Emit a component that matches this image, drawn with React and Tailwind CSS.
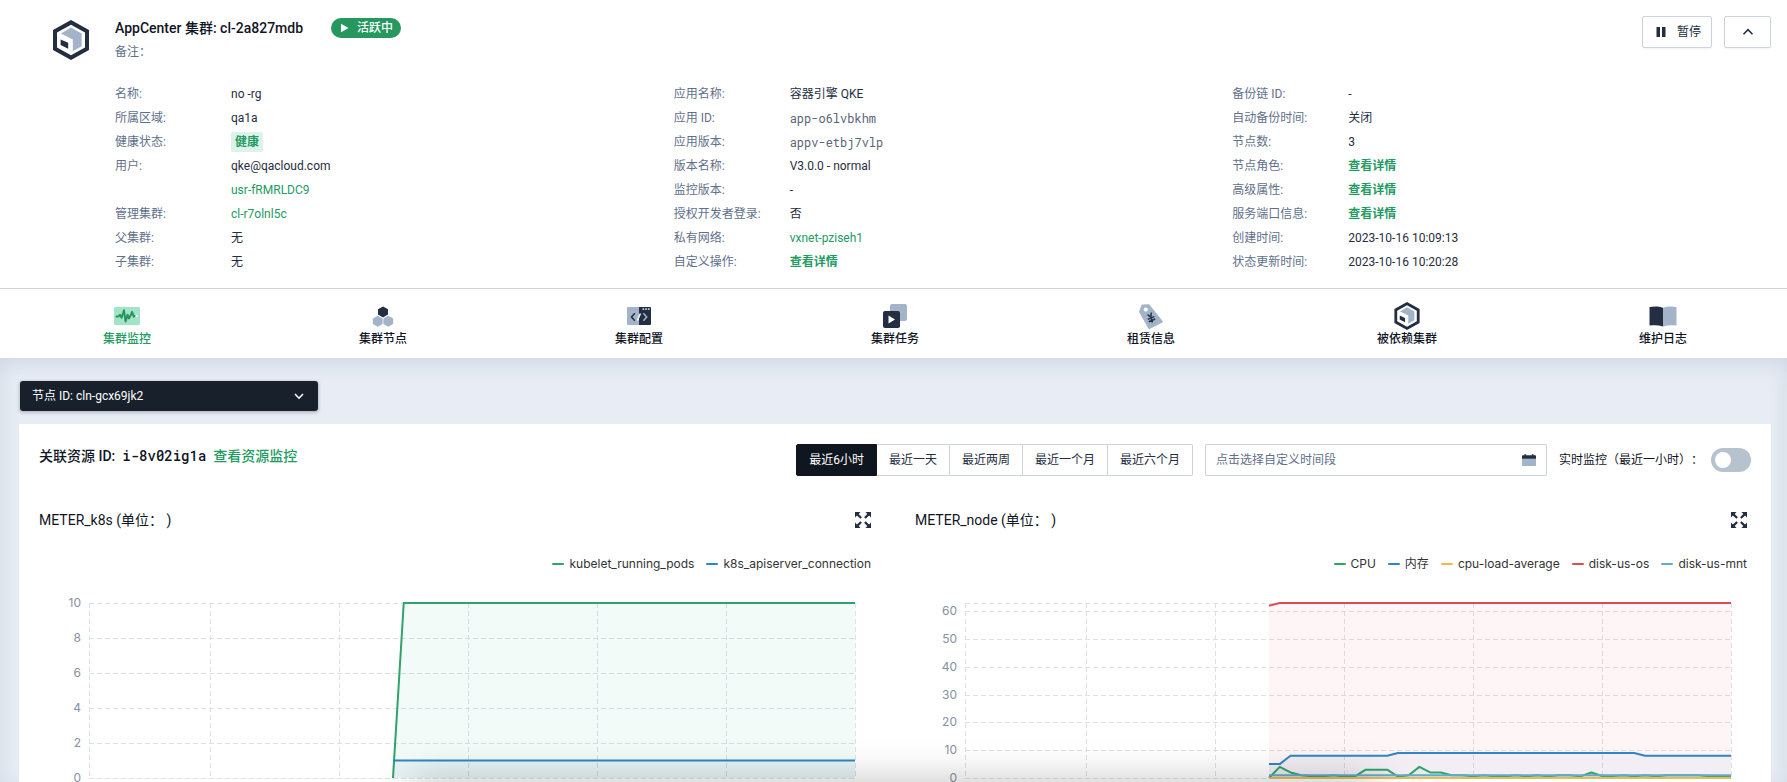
import React from "react";

const SANS = "font-[Roboto,'Noto_Sans_CJK_SC',sans-serif]";
const MONO = "font-['Roboto_Mono','Liberation_Mono',monospace]";

function ClusterIcon({ className }) {
  return (
    <svg viewBox="0 0 36 40" className={className} aria-hidden="true">
      <path fillRule="evenodd" fill="#242e42" d="M18 0 36 10v20L18 40 0 30V10ZM18 4.8 4 12.4v15.2l14 7.6 14-7.6V12.4Z" />
      <path fill="#a3b4c8" d="M18 7.6 28.6 13.4v12.8L19.8 31.2V19.4L8 13.6Z" />
      <path fill="#242e42" d="M7.6 19.4 15.2 22.8v6L7.6 25Z" />
    </svg>
  );
}

function MonitorIcon() {
  return (
    <svg viewBox="0 0 28 28" className="size-7" aria-hidden="true">
      <rect x="1" y="5" width="26" height="18" rx="1.5" fill="#a3e3c6" />
      <path d="M3.5 14.5h2l1.5-1.8 1.6 3L11 8.2l1.6 11.4 2-7 1.3 3.8 1.6-2.6 1.6-4 1.7 5 1.2-1" fill="none" stroke="#27935f" strokeWidth="1.9" strokeLinejoin="round" strokeLinecap="round" />
      <circle cx="23.6" cy="14" r="1.2" fill="#fff" />
    </svg>
  );
}

function NodesIcon() {
  return (
    <svg viewBox="0 0 28 28" className="size-7" aria-hidden="true">
      <path fill="#242e42" d="m14 4.4 5 2.8v5.4l-5 2.800-5-2.800V7.200Z" />
      <path fill="#a3b4c8" d="m8.700 13.800 4.900 2.800v5.400l-4.900 2.800-4.900-2.800v-5.400ZM19.300 13.800l4.900 2.800v5.400l-4.900 2.800-4.900-2.800v-5.400Z" />
    </svg>
  );
}

function ConfigIcon() {
  return (
    <svg viewBox="0 0 28 28" className="size-7" aria-hidden="true">
      <path fill="#a3b4c8" d="M3 5h11v18H3a1 1 0 0 1-1-1V6a1 1 0 0 1 1-1Z" />
      <path fill="#242e42" d="M14 5h11a1 1 0 0 1 1 1v16a1 1 0 0 1-1 1H14Z" />
      <path d="m9.800 11.300-3.300 3.700 3.300 3.700" fill="none" stroke="#242e42" strokeWidth="1.500" />
      <path d="m18.400 11.300 3.300 3.700-3.300 3.700" fill="none" stroke="#a3b4c8" strokeWidth="1.500" />
      <path d="m15.400 11.500-3 7" stroke="#fff" strokeWidth="1.500" />
      <path d="M17.500 7.200h1.700M20.200 7.200h1.700M22.900 7.200h1.700" stroke="#c1c9d1" strokeWidth="1.700" />
    </svg>
  );
}

function TasksIcon() {
  return (
    <svg viewBox="0 0 28 28" className="size-7" aria-hidden="true">
      <rect x="9" y="2" width="17" height="17" rx="2" fill="#a3b4c8" />
      <rect x="2" y="9" width="17" height="17" rx="2" fill="#242e42" />
      <path fill="#fff" d="m7.500 13.500 6.500 4-6.500 4Z" />
    </svg>
  );
}

function LeaseIcon() {
  return (
    <svg viewBox="0 0 28 28" className="size-7" aria-hidden="true">
      <path fill="#a3b4c8" d="M5.500 2.500 11.500 2.200a1.500 1.500 0 0 1 1.300.7L25.700 19.200a1 1 0 0 1-.3 1.300L12.600 27a1 1 0 0 1-1.300-.5L2.300 10.200a1.500 1.500 0 0 1 0-1.200L4.400 3.200a1.500 1.500 0 0 1 1.100-.7Z" />
      <circle cx="8.800" cy="7.600" r="2.100" fill="#fff" />
      <path d="m10.500 12.600 3.200 2.400.7-4.400M13.700 15l1.800 5.400M10.700 17.400l6.600-2.800M11.800 19.800l6.400-2.800" fill="none" stroke="#242e42" strokeWidth="1.500" />
    </svg>
  );
}

function LogIcon() {
  return (
    <svg viewBox="0 0 28 28" className="size-7" aria-hidden="true">
      <path fill="#242e42" d="M.5 5c5-1 9.500-.8 13.500.8V24.500C9.500 23 5 22.800.5 23.600Z" />
      <path fill="#a3b4c8" d="M27.500 5c-5-1-9.500-.8-13.500.8V24.500c4.500-1.500 9-1.700 13.500-.9Z" />
    </svg>
  );
}

function ExpandIcon() {
  return (
    <svg viewBox="0 0 16 16" className="size-4" aria-hidden="true">
      <path fill="#242e42" d="M0 0h5.500L3.700 1.900l3.200 3.400-1.500 1.500-3.500-3.200L0 5.500ZM16 0v5.500l-1.900-1.900-3.500 3.200-1.500-1.500 3.200-3.400L10.500 0ZM0 16v-5.500l1.900 1.900 3.500-3.200 1.500 1.500-3.200 3.400L5.500 16ZM16 16h-5.500l1.800-1.900-3.200-3.400 1.500-1.500 3.500 3.200 1.900-1.900Z" />
    </svg>
  );
}

const DETAILS = "查看详情";

const INFO = [
  [
    ["名称:", "no -rg"],
    ["所属区域:", "qa1a"],
    ["健康状态:", "健康", "tag"],
    ["用户:", "qke@qacloud.com"],
    ["", "usr-fRMRLDC9", "link"],
    ["管理集群:", "cl-r7olnl5c", "link"],
    ["父集群:", "无"],
    ["子集群:", "无"],
  ],
  [
    ["应用名称:", "容器引擎 QKE"],
    ["应用 ID:", "app-o6lvbkhm", "mono"],
    ["应用版本:", "appv-etbj7vlp", "mono"],
    ["版本名称:", "V3.0.0 - normal"],
    ["监控版本:", "-"],
    ["授权开发者登录:", "否"],
    ["私有网络:", "vxnet-pziseh1", "link"],
    ["自定义操作:", DETAILS, "action"],
  ],
  [
    ["备份链 ID:", "-"],
    ["自动备份时间:", "关闭"],
    ["节点数:", "3"],
    ["节点角色:", DETAILS, "action"],
    ["高级属性:", DETAILS, "action"],
    ["服务端口信息:", DETAILS, "action"],
    ["创建时间:", "2023-10-16 10:09:13"],
    ["状态更新时间:", "2023-10-16 10:20:28"],
  ],
];

function Value({ text, kind }) {
  if (kind === "tag")
    return <span className="inline-block rounded-xs bg-[#ddf3e9] px-1 leading-5 font-bold text-[#229b62]">{text}</span>;
  if (kind === "link") return <a href="#" className="text-[#229b62]">{text}</a>;
  if (kind === "action") return <a href="#" className="font-bold text-[#229b62]">{text}</a>;
  if (kind === "mono") return <span className={`${MONO} text-[#5a6575]`}>{text}</span>;
  return text;
}

function Header() {
  return (
    <header className="flex border-b border-[#ccd3db] bg-white pt-4 pr-4 pb-[14px] pl-[53px]">
      <ClusterIcon className="mt-1 mr-[26px] h-10 w-9 shrink-0" />
      <div className="min-w-0 flex-1">
        <div className="flex items-start justify-between">
          <div>
            <div className="flex h-6 items-center gap-7">
              <h1 className="text-sm font-medium text-[#10151f]">AppCenter 集群: cl-2a827mdb</h1>
              <span className="flex h-5 items-center gap-1.5 rounded-full bg-[#26985f] px-2 text-xs font-medium text-white">
                <svg viewBox="0 0 12 12" className="size-3" aria-hidden="true">
                  <path fill="#fff" d="m2 1.800 7.500 4.200L2 10.200Z" />
                </svg>
                活跃中
              </span>
            </div>
            <p className="text-xs leading-6 text-[#5f708a]">备注：</p>
          </div>
          <div className="flex gap-3">
            <button type="button" className="flex h-8 items-center gap-2 rounded-xs border border-[#ccd3db] px-[10px] text-xs text-[#242e42] shadow-xs">
              <svg viewBox="0 0 16 16" className="size-4" aria-hidden="true">
                <path fill="#242e42" d="M3.500 3h3.500v10H3.500ZM9 3h3.500v10H9Z" />
              </svg>
              暂停
            </button>
            <button type="button" aria-label="收起" className="flex h-8 w-[47px] items-center justify-center rounded-xs border border-[#ccd3db] shadow-xs">
              <svg viewBox="0 0 16 16" className="size-4" aria-hidden="true">
                <path d="m3.500 10.300 4.500-4.600 4.500 4.600" fill="none" stroke="#242e42" strokeWidth="1.600" />
              </svg>
            </button>
          </div>
        </div>
        <div className="mt-[18px] grid grid-cols-3 gap-5 text-xs text-[#242e42]">
          {INFO.map((rows, c) => (
            <dl key={c}>
              {rows.map(([label, text, kind], i) => (
                <div key={i} className="flex h-6 items-center">
                  <dt className="w-[116px] shrink-0 text-[#5f708a]">{label}</dt>
                  <dd><Value text={text} kind={kind} /></dd>
                </div>
              ))}
            </dl>
          ))}
        </div>
      </div>
    </header>
  );
}

const TABS = [
  ["集群监控", <MonitorIcon />],
  ["集群节点", <NodesIcon />],
  ["集群配置", <ConfigIcon />],
  ["集群任务", <TasksIcon />],
  ["租赁信息", <LeaseIcon />],
  ["被依赖集群", <ClusterIcon className="h-7 w-7" />],
  ["维护日志", <LogIcon />],
];

function Tabs() {
  return (
    <nav className="-mr-1 -ml-px grid grid-cols-7 bg-white pt-[13px] pb-[10px]">
      {TABS.map(([label, icon], i) => (
        <a key={label} href="#" className={`flex flex-col items-center text-xs leading-[18px] font-medium ${i === 0 ? "text-[#229b62]" : "text-[#10151f]"}`}>
          <span className="flex h-7 items-center">{icon}</span>
          {label}
        </a>
      ))}
    </nav>
  );
}

const RANGES = ["最近6小时", "最近一天", "最近两周", "最近一个月", "最近六个月"];

function Toolbar() {
  return (
    <div className="flex items-start justify-between px-5 pt-5">
      <h2 className="flex gap-[7px] text-sm leading-6 font-medium text-[#10151f]">
        关联资源 ID:
        <span className={MONO}>i-8v02ig1a</span>
        <a href="#" className="text-[#229b62]">查看资源监控</a>
      </h2>
      <div className="flex items-center text-xs text-[#242e42]">
        <div className="flex">
          {RANGES.map((r, i) => (
            <button
              key={r}
              type="button"
              className={
                i === 0
                  ? "h-8 rounded-l-xs border border-[#10161f] bg-[#10161f] px-3 text-white"
                  : "h-8 border border-l-0 border-[#ccd3db] px-3 last:rounded-r-xs"
              }
            >
              {r}
            </button>
          ))}
        </div>
        <label className="mr-3 ml-3 flex h-8 w-[342px] items-center rounded-xs border border-[#ccd3db] px-[10px]">
          <input type="text" aria-label="自定义时间段" placeholder="点击选择自定义时间段" className="min-w-0 flex-1 outline-none placeholder:text-[#5f708a]" />
          <svg viewBox="0 0 14 12" className="h-3 w-[14px]" aria-hidden="true">
            <path fill="#a3b4c8" d="M0 4.500h14v6.700a.8.800 0 0 1-.8.800H.8a.8.800 0 0 1-.8-.8Z" />
            <path fill="#242e42" d="M.8 1.300h1.700V.3h1.600v1h5.800v-1h1.600v1h1.700a.8.800 0 0 1 .8.800v2.700H0V2.100a.8.800 0 0 1 .8-.8Z" />
          </svg>
        </label>
        <label htmlFor="realtime" className="mr-2 text-[#10151f] [text-spacing-trim:space-all]">实时监控（最近一小时）：</label>
        <input
          id="realtime"
          type="checkbox"
          className="h-6 w-10 appearance-none rounded-full bg-[#b6c2cd] p-1 before:block before:size-4 before:rounded-full before:bg-white checked:bg-[#229b62] checked:before:translate-x-4"
        />
      </div>
    </div>
  );
}

const PLOT_W = 766;
const PLOT_H = 175;
const START = 304;
const STEP = (PLOT_W - START) / 43;
const GRID_X = [0, 121, 250, 379, 508, 637, 766];

const fill = (n, v) => Array(n).fill(v);

const K8S = {
  title: "METER_k8s (单位： )",
  max: 10,
  ticks: [10, 8, 6, 4, 2, 0],
  series: [
    { name: "kubelet_running_pods", color: "#2fa36c", area: "#1fb58a", values: [0, ...fill(43, 10)] },
    { name: "k8s_apiserver_connection", color: "#2f86c6", area: "#2f86c6", values: fill(44, 1) },
  ],
};

const NODE = {
  title: "METER_node (单位： )",
  max: 63,
  ticks: [60, 50, 40, 30, 20, 10, 0],
  series: [
    {
      name: "CPU",
      color: "#2fa36c",
      area: "#1fb58a",
      values: [0, 4, 2, 1, 0.6, 0.6, 1, 0.5, 0.6, 3, 3, 3, 0.5, 1, 4, 2, 2, 1, 1, 0.6, 1, 0.6, 0.6, 1, 0.6, 1, 0.6, 1, 1, 0.6, 2, 0.7, 0.7, 1, 0.6, 1, 0.6, 1, 1, 1, 1, 0.6, 0.6, 0.6],
    },
    { name: "内存", color: "#2f86c6", area: "#2f86c6", values: [5, 5, ...fill(10, 8), ...fill(23, 9), ...fill(9, 8)] },
    { name: "cpu-load-average", color: "#f0b94f", area: "#f0b94f", values: fill(44, 0) },
    { name: "disk-us-os", color: "#d64e52", area: "#e8495f", values: [62, ...fill(43, 63)] },
    { name: "disk-us-mnt", color: "#62abc9", area: "#62abc9", values: fill(44, 1) },
  ],
};

function Chart({ data }) {
  const y = (v) => PLOT_H - (v / data.max) * PLOT_H;
  const points = (values) => values.map((v, i) => `${START + i * STEP},${y(v)}`).join(" ");
  const rows = data.ticks.includes(data.max) ? data.ticks : [data.max, ...data.ticks];
  return (
    <section className="px-5">
      <div className="flex h-6 items-center justify-between">
        <h3 className="text-sm text-[#10151f]">{data.title}</h3>
        <button type="button" aria-label="放大" className="p-1"><ExpandIcon /></button>
      </div>
      <ul className="mt-[22px] flex h-5 justify-end gap-3 pr-1 font-[Inter,'Noto_Sans_CJK_SC',sans-serif] text-xs leading-5 text-[#333]">
        {data.series.map((s) => (
          <li key={s.name} className="flex items-center gap-[5px]">
            <span className="h-0.5 w-3 rounded-full" style={{ background: s.color }} />
            {s.name}
          </li>
        ))}
      </ul>
      <div className="mt-[29px] flex h-[175px] pr-5">
        <div className="relative mr-2 w-[42px] shrink-0 font-[Inter,sans-serif] text-xs leading-2 text-[#86909f]">
          {data.ticks.map((t) => (
            <span key={t} className="absolute right-0 -translate-y-1/2" style={{ top: `${(y(t) / PLOT_H) * 100}%` }}>{t}</span>
          ))}
        </div>
        <svg viewBox={`0 0 ${PLOT_W} ${PLOT_H}`} preserveAspectRatio="none" className="h-full min-w-0 flex-1 overflow-visible" role="img" aria-label={data.title}>
          <g fill="none" stroke="#dde2e7" strokeDasharray="5 3">
            {rows.map((t) => (
              <path key={t} d={`M0 ${Math.round(y(t)) + 0.5}H${PLOT_W}`} vectorEffect="non-scaling-stroke" />
            ))}
            {GRID_X.map((x) => (
              <path key={x} d={`M${x + 0.5} 0V${PLOT_H}`} vectorEffect="non-scaling-stroke" />
            ))}
          </g>
          {data.series.map((s) => (
            <polygon key={s.name} fill={s.area} fillOpacity="0.055" points={`${START},${PLOT_H} ${points(s.values)} ${PLOT_W},${PLOT_H}`} />
          ))}
          {data.series.map((s) => (
            <polyline key={s.name} fill="none" stroke={s.color} strokeWidth="2" strokeLinejoin="round" vectorEffect="non-scaling-stroke" points={points(s.values)} />
          ))}
        </svg>
      </div>
    </section>
  );
}

export default function App() {
  return (
    <div className={`${SANS} relative min-h-screen overflow-hidden bg-white`}>
      <Header />
      <Tabs />
      <main className="bg-[#e8edf5] pt-[22px] pr-4 pl-[19px] shadow-[inset_0_6px_20px_rgba(60,90,120,0.14)]">
        <div className="relative w-[300px]">
          <select aria-label="节点" className="h-8 w-full appearance-none rounded-sm border border-transparent bg-[#17202b] bg-clip-padding px-3 text-xs text-white shadow-[0_1px_3px_rgba(36,46,66,0.25)]">
            <option>节点 ID: cln-gcx69jk2</option>
          </select>
          <svg viewBox="0 0 16 16" className="pointer-events-none absolute top-2 right-3 size-4" aria-hidden="true">
            <path d="m4 6 4 4.200L12 6" fill="none" stroke="#fff" strokeWidth="1.600" />
          </svg>
        </div>
        <div className="mt-3 bg-white pb-1">
          <Toolbar />
          <div className="mt-8 grid grid-cols-2">
            <Chart data={K8S} />
            <Chart data={NODE} />
          </div>
        </div>
      </main>
      <div className="pointer-events-none absolute inset-x-[23%] top-full h-10 shadow-[0_0_40px_rgba(0,0,0,0.25)]" />
    </div>
  );
}
